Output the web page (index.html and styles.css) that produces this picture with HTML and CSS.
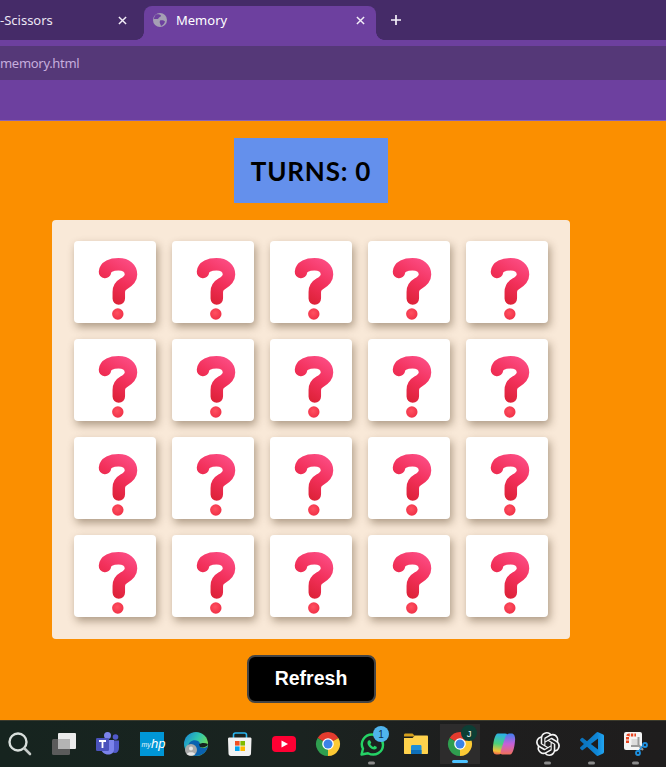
FILE: index.html
```html
<!DOCTYPE html>
<html lang="en">
<head>
<meta charset="utf-8">
<title>Memory</title>
<link rel="stylesheet" href="styles.css">
</head>
<body>
<svg class="defs" aria-hidden="true">
  <defs>
    <linearGradient id="qg" gradientUnits="userSpaceOnUse" x1="60" y1="24" x2="38" y2="60">
      <stop offset="0" stop-color="#fb4a80"/>
      <stop offset="0.5" stop-color="#f2305a"/>
      <stop offset="1" stop-color="#dd2238"/>
    </linearGradient>
    <radialGradient id="dg" cx="0.45" cy="0.4" r="0.7">
      <stop offset="0" stop-color="#ff5060"/>
      <stop offset="1" stop-color="#ee2c44"/>
    </radialGradient>
    <symbol id="q" viewBox="0 0 82 82">
      <path d="M31 31C31.500 25.500 37.500 23.300 44.500 23.300C52.500 23.300 57 27.500 57 33.500C57 38.500 53 41 49.500 43C46 45 44.800 47 44.800 51L44.800 57.500" fill="none" stroke="url(#qg)" stroke-width="12.500" stroke-linecap="round" stroke-linejoin="round"/>
      <circle cx="43.800" cy="73" r="5.700" fill="url(#dg)"/>
    </symbol>
    <symbol id="chrome" viewBox="0 0 40 47">
      <path d="M20 24L9.600 18A12 12 0 0 1 30.400 18Z" fill="#e33b2e"/>
      <path d="M20 24L30.400 18A12 12 0 0 1 20 36Z" fill="#fcc934"/>
      <path d="M20 24L20 36A12 12 0 0 1 9.600 18Z" fill="#2f9e4f"/>
      <circle cx="20" cy="24" r="5.800" fill="#fff"/>
      <circle cx="20" cy="24" r="4.500" fill="#3b82e8"/>
    </symbol>
    <linearGradient id="edge" x1="0.1" y1="0.1" x2="0.9" y2="0.6">
      <stop offset="0" stop-color="#1b8fd0"/>
      <stop offset="0.5" stop-color="#2fc5b0"/>
      <stop offset="1" stop-color="#6fdc5c"/>
    </linearGradient>
    <linearGradient id="vs" x1="0" y1="0" x2="1" y2="0">
      <stop offset="0" stop-color="#0a70b8"/>
      <stop offset="0.7" stop-color="#0f86d6"/>
      <stop offset="1" stop-color="#22a5f1"/>
    </linearGradient>
    <linearGradient id="copa" x1="0.5" y1="0" x2="0.4" y2="1">
      <stop offset="0" stop-color="#2bb0e8"/>
      <stop offset="0.5" stop-color="#4bd07a"/>
      <stop offset="0.85" stop-color="#f5c13a"/>
      <stop offset="1" stop-color="#ee6a4a"/>
    </linearGradient>
    <linearGradient id="copb" x1="0.5" y1="0" x2="0.5" y2="1">
      <stop offset="0" stop-color="#f0705a"/>
      <stop offset="0.5" stop-color="#c75fd8"/>
      <stop offset="1" stop-color="#3f7ff0"/>
    </linearGradient>
  </defs>
</svg>

<header class="chrome">
  <div class="tabstrip">
    <div class="tab">
      <span class="tab-title">-Scissors</span>
      <svg class="close" viewBox="0 0 10 10"><path d="M1 1L9 9M9 1L1 9"/></svg>
    </div>
    <div class="tab tab-active">
      <svg class="globe" viewBox="0 0 14 14">
        <circle cx="7" cy="7" r="7" fill="#a59fb4"/>
        <path d="M3 1.500C5 1 7 1.500 8 2.500C8 4 6 4 5.500 5.200C5 6.500 3 6 1 6C1 4 2 2.500 3 1.500ZM7 7.500C9 7 11 7.500 12 8.500C11.500 10.500 10 12.500 8 13C7.500 11 6 9.500 7 7.500Z" fill="#6d409f"/>
      </svg>
      <span class="tab-title">Memory</span>
      <svg class="close" viewBox="0 0 10 10"><path d="M1 1L9 9M9 1L1 9"/></svg>
    </div>
    <svg class="plus" viewBox="0 0 12 12"><path d="M6 1V11M1 6H11"/></svg>
  </div>
  <div class="toolbar">
    <div class="address">memory.html</div>
  </div>
  <div class="bookmarks"></div>
</header>

<main class="page">
  <div class="turns">TURNS: 0</div>
  <section class="board">
    <div class="card"><svg class="q"><use href="#q"/></svg></div>
    <div class="card"><svg class="q"><use href="#q"/></svg></div>
    <div class="card"><svg class="q"><use href="#q"/></svg></div>
    <div class="card"><svg class="q"><use href="#q"/></svg></div>
    <div class="card"><svg class="q"><use href="#q"/></svg></div>
    <div class="card"><svg class="q"><use href="#q"/></svg></div>
    <div class="card"><svg class="q"><use href="#q"/></svg></div>
    <div class="card"><svg class="q"><use href="#q"/></svg></div>
    <div class="card"><svg class="q"><use href="#q"/></svg></div>
    <div class="card"><svg class="q"><use href="#q"/></svg></div>
    <div class="card"><svg class="q"><use href="#q"/></svg></div>
    <div class="card"><svg class="q"><use href="#q"/></svg></div>
    <div class="card"><svg class="q"><use href="#q"/></svg></div>
    <div class="card"><svg class="q"><use href="#q"/></svg></div>
    <div class="card"><svg class="q"><use href="#q"/></svg></div>
    <div class="card"><svg class="q"><use href="#q"/></svg></div>
    <div class="card"><svg class="q"><use href="#q"/></svg></div>
    <div class="card"><svg class="q"><use href="#q"/></svg></div>
    <div class="card"><svg class="q"><use href="#q"/></svg></div>
    <div class="card"><svg class="q"><use href="#q"/></svg></div>
  </section>
  <button class="refresh" type="button">Refresh</button>
</main>

<footer class="taskbar">
  <div class="task"><svg viewBox="0 0 40 47">
    <circle cx="18" cy="22" r="8.500" fill="none" stroke="#d9dfdc" stroke-width="2.400"/>
    <path d="M24.500 28.500L30 34" stroke="#c5cbc8" stroke-width="2.600" stroke-linecap="round"/>
  </svg></div>
  <div class="task"><svg viewBox="0 0 40 47">
    <rect x="8" y="19" width="18" height="16" rx="1.500" fill="#5b5b5b"/>
    <rect x="14" y="13" width="18" height="16" rx="1" fill="#ececec"/>
    <rect x="14" y="19" width="12" height="10" fill="#b4b4b4"/>
  </svg></div>
  <div class="task"><svg viewBox="0 0 40 47">
    <circle cx="27.500" cy="17" r="2.800" fill="#5059c9"/>
    <path d="M23 20.500H31V28C31 31 29 33 27 33C25 33 23 31 23 28Z" fill="#5059c9"/>
    <circle cx="19.500" cy="15.500" r="3.500" fill="#7b83eb"/>
    <path d="M13 20H26V29.500C26 32.500 23.500 34.500 20 34.500C16.500 34.500 13 32 13 28Z" fill="#7b83eb"/>
    <rect x="8" y="18" width="13" height="13" rx="1.200" fill="#4b53bc"/>
    <path d="M11 21H18M14.500 21V28" stroke="#fff" stroke-width="1.800" fill="none"/>
  </svg></div>
  <div class="task"><svg viewBox="0 0 40 47">
    <rect x="8" y="12" width="24" height="24" fill="#0096d6"/>
    <text x="9.500" y="27" class="hp-my">my</text>
    <text x="19" y="28" class="hp-hp">hp</text>
  </svg></div>
  <div class="task"><svg viewBox="0 0 40 47">
    <circle cx="20" cy="24" r="12" fill="url(#edge)"/>
    <path d="M12 27C12 21 18 19 22 21C25 23 24.500 26 24 27C27 29 31 28 32 25C31.500 32 26 36 20 36C15 36 12 32 12 27Z" fill="#0a62b0"/>
    <path d="M23 24.500C25 22.500 29 22.500 32 24C31 27 27 28 24 27Z" fill="#16231f"/>
    <circle cx="15" cy="30" r="6" fill="#a9a9a9"/>
    <circle cx="15" cy="28.500" r="2" fill="#e6e6e6"/>
    <path d="M11 34C11.500 31.500 18.500 31.500 19 34C17 36 13 36 11 34Z" fill="#e6e6e6"/>
  </svg></div>
  <div class="task"><svg viewBox="0 0 40 47">
    <path d="M13.500 20V15C13.500 13.500 14.500 13 15.500 13H24.500C25.500 13 26.500 13.500 26.500 15V20" fill="none" stroke="#29b6ef" stroke-width="1.600"/>
    <path d="M8 19C8 18 8.500 17.500 9.500 17.500H30C31 17.500 31.500 18 31.500 19L31 33.500C31 35 30 36 28.500 36H11C9.500 36 8.500 35 8.500 33.500Z" fill="#f2f2f2"/>
    <rect x="15" y="21" width="4.600" height="4.600" fill="#f25022"/>
    <rect x="20.400" y="21" width="4.600" height="4.600" fill="#7fba00"/>
    <rect x="15" y="26.400" width="4.600" height="4.600" fill="#00a4ef"/>
    <rect x="20.400" y="26.400" width="4.600" height="4.600" fill="#ffb900"/>
  </svg></div>
  <div class="task"><svg viewBox="0 0 40 47">
    <rect x="8" y="16" width="24" height="16" rx="4" fill="#ff0033"/>
    <path d="M17.500 20.500L24 24L17.500 27.500Z" fill="#fff"/>
  </svg></div>
  <div class="task"><svg viewBox="0 0 40 47"><use href="#chrome"/></svg></div>
  <div class="task"><svg viewBox="0 0 40 47">
    <path d="M9.500 34.500L11 28.800C7.500 22 12.500 14.500 20 14.500C26.500 14.500 31 19 31 25C31 32 23.500 37 16 33.200Z" fill="none" stroke="#25d366" stroke-width="2.400" stroke-linejoin="round"/>
    <path d="M16.500 20.500C15 21.500 15 24 17 26.500C19 29 22 30 24 29C25 28.400 25 27.200 24.500 26.800L22.500 25.800L21.300 27C20 26.500 18.800 25.200 18.300 24L19.300 22.800L18.300 20.700C17.800 20.200 17 20.200 16.500 20.500Z" fill="#25d366"/>
    <circle cx="29" cy="14" r="8" fill="#4fb4ee"/>
    <text x="29" y="17.500" class="badge-one">1</text>
    <rect x="16" y="41.500" width="7" height="3" rx="1.500" fill="#8a8a8a"/>
  </svg></div>
  <div class="task"><svg viewBox="0 0 40 47">
    <path d="M8 15C8 14 8.500 13.500 9.500 13.500H16.500L19.500 16.500H8Z" fill="#d59f1c"/>
    <path d="M8 18H16.500L19 15.500H31C31.600 15.500 32 16 32 16.500V33C32 33.600 31.600 34 31 34H9C8.400 34 8 33.600 8 33Z" fill="#ffd24c"/>
    <path d="M15 26.500C15 25.500 15.500 25 16.500 25H24C25 25 25.500 25.500 25.500 26.500V34H15Z" fill="#1f8fd8"/>
    <rect x="15" y="30" width="10.500" height="4" fill="#0f6fb8"/>
  </svg></div>
  <div class="task task-active"><svg viewBox="0 0 40 47">
    <use href="#chrome"/>
    <circle cx="29" cy="13" r="8" fill="#0c3f35"/>
    <text x="29" y="16.500" class="badge-j">J</text>
    <rect x="12" y="40" width="16" height="3" rx="1.500" fill="#4cc2ff"/>
  </svg></div>
  <div class="task"><svg viewBox="0 0 40 47">
    <path d="M14 13.500H21C23.500 13.500 24 15 23 18L19 30C18 33 17 34.500 14 34.500H12.500C9.500 34.500 8.500 31 9 27C9.500 21 11 13.500 14 13.500Z" fill="url(#copa)"/>
    <path transform="rotate(180 20 24)" d="M14 13.500H21C23.500 13.500 24 15 23 18L19 30C18 33 17 34.500 14 34.500H12.500C9.500 34.500 8.500 31 9 27C9.500 21 11 13.500 14 13.500Z" fill="url(#copb)"/>
  </svg></div>
  <div class="task"><svg viewBox="0 0 40 47">
    <g transform="translate(8 12)"><path fill="#f4f4f4" d="M22.2819 9.8211a5.9847 5.9847 0 0 0-.5157-4.9108 6.0462 6.0462 0 0 0-6.5098-2.9A6.0651 6.0651 0 0 0 4.9807 4.1818a5.9847 5.9847 0 0 0-3.9977 2.9 6.0462 6.0462 0 0 0 .7427 7.0966 5.98 5.98 0 0 0 .511 4.9107 6.051 6.051 0 0 0 6.5146 2.9001A5.9847 5.9847 0 0 0 13.2599 24a6.0557 6.0557 0 0 0 5.7718-4.2058 5.9894 5.9894 0 0 0 3.9977-2.9001 6.0557 6.0557 0 0 0-.7475-7.0729zm-9.022 12.6081a4.4755 4.4755 0 0 1-2.8764-1.0408l.1419-.0804 4.7783-2.7582a.7948.7948 0 0 0 .3927-.6813v-6.7369l2.02 1.1686a.071.071 0 0 1 .038.052v5.5826a4.504 4.504 0 0 1-4.4945 4.4944zm-9.6607-4.1254a4.4708 4.4708 0 0 1-.5346-3.0137l.142.0852 4.783 2.7582a.7712.7712 0 0 0 .7806 0l5.8428-3.3685v2.3324a.0804.0804 0 0 1-.0332.0615L9.74 19.9502a4.4992 4.4992 0 0 1-6.1408-1.6464zM2.3408 7.8956a4.485 4.485 0 0 1 2.3655-1.9728V11.6a.7664.7664 0 0 0 .3879.6765l5.8144 3.3543-2.0201 1.1685a.0757.0757 0 0 1-.071 0l-4.8303-2.7865A4.504 4.504 0 0 1 2.3408 7.872zm16.5963 3.8558L13.1038 8.364 15.1192 7.2a.0757.0757 0 0 1 .071 0l4.8303 2.7913a4.4944 4.4944 0 0 1-.6765 8.1042v-5.6772a.79.79 0 0 0-.407-.667zm2.0107-3.0231l-.142-.0852-4.7735-2.7818a.7759.7759 0 0 0-.7854 0L9.409 9.2297V6.8974a.0662.0662 0 0 1 .0284-.0615l4.8303-2.7866a4.4992 4.4992 0 0 1 6.6802 4.66zM8.3065 12.863l-2.02-1.1638a.0804.0804 0 0 1-.038-.0567V6.0742a4.4992 4.4992 0 0 1 7.3757-3.4537l-.142.0805L8.704 5.459a.7948.7948 0 0 0-.3927.6813zm1.0976-2.3654l2.602-1.4998 2.6069 1.4998v2.9994l-2.5974 1.4997-2.6067-1.4997Z"/></g>
    <rect x="16" y="41.500" width="7" height="3" rx="1.500" fill="#8a8a8a"/>
  </svg></div>
  <div class="task"><svg viewBox="0 0 40 47">
    <g transform="translate(8 12)"><path fill="url(#vs)" d="M23.15 2.587L18.21.21a1.494 1.494 0 0 0-1.705.29l-9.46 8.63-4.12-3.128a.999.999 0 0 0-1.276.057L.327 7.261A1 1 0 0 0 .326 8.74L3.899 12 .326 15.26a1 1 0 0 0 .001 1.479L1.65 17.94a.999.999 0 0 0 1.276.057l4.12-3.128 9.46 8.63a1.492 1.492 0 0 0 1.704.29l4.942-2.377A1.5 1.5 0 0 0 24 20.06V3.939a1.5 1.5 0 0 0-.85-1.352zm-5.146 14.861L10.826 12l7.178-5.448v10.896z"/></g>
    <rect x="16" y="41.500" width="7" height="3" rx="1.500" fill="#8a8a8a"/>
  </svg></div>
  <div class="task"><svg viewBox="0 0 40 47">
    <rect x="8" y="12" width="18" height="18" rx="2" fill="#f4f4f4"/>
    <path d="M11.500 23V16.500C11.500 15.500 12 15 13 15H20" fill="none" stroke="#e8431f" stroke-width="3" stroke-dasharray="2.400 1.100"/>
    <path d="M15.500 19H22V26H15.500Z" fill="#dcdcdc"/>
    <path d="M22.500 17V25L27 30M15 26H24" fill="none" stroke="#9a9a9a" stroke-width="2"/>
    <circle cx="29" cy="25" r="2" fill="none" stroke="#1e90e0" stroke-width="1.800"/>
    <circle cx="22" cy="33" r="2" fill="none" stroke="#1e90e0" stroke-width="1.800"/>
    <path d="M23 31L26 26.500L27.500 25.500" fill="none" stroke="#1e90e0" stroke-width="1.400"/>
    <rect x="16" y="41.500" width="7" height="3" rx="1.500" fill="#8a8a8a"/>
  </svg></div>
</footer>
</body>
</html>
```

FILE: styles.css
```css
* {
  box-sizing: border-box;
}

html,
body {
  margin: 0;
  height: 767px;
  overflow: hidden;
}

body {
  display: flex;
  flex-direction: column;
  background: #fb8f00;
  font-family: "Noto Sans", sans-serif;
}

.defs {
  display: block;
  width: 0;
  height: 0;
}

/* browser chrome */
.tabstrip {
  display: flex;
  align-items: flex-end;
  height: 40px;
  background: #452b68;
}

.tab {
  position: relative;
  display: flex;
  align-items: center;
  justify-content: space-between;
  width: 144px;
  height: 34px;
  padding: 0 17px 6px 0;
  color: #ece6f4;
  font-size: 13px;
}

.tab-active {
  justify-content: flex-start;
  width: 232px;
  padding: 0 11px 6px 9px;
  gap: 9px;
  background: #6d409f;
  border-radius: 8px 8px 0 0;
  color: #fff;
}

.tab-active::before,
.tab-active::after {
  content: "";
  position: absolute;
  bottom: 0;
  width: 8px;
  height: 8px;
}

.tab-active::before {
  left: -8px;
  background: radial-gradient(circle at 0 0, transparent 7.5px, #6d409f 8px);
}

.tab-active::after {
  right: -8px;
  background: radial-gradient(circle at 100% 0, transparent 7.5px, #6d409f 8px);
}

.tab-title {
  line-height: 18px;
}

.globe {
  flex: none;
  width: 14px;
  height: 14px;
}

.close {
  flex: none;
  width: 9px;
  height: 9px;
  fill: none;
  stroke: #f3eef8;
  stroke-width: 1.600;
}

.tab-active .close {
  margin-left: auto;
}

.plus {
  flex: none;
  width: 12px;
  height: 12px;
  margin: 0 0 14px 14px;
  fill: none;
  stroke: #f5f1fa;
  stroke-width: 1.700;
}

.toolbar {
  height: 40px;
  padding-top: 6px;
  background: #6d409f;
}

.address {
  height: 34px;
  background: #553878;
  color: #c6aedd;
  font-size: 13px;
  letter-spacing: -0.3px;
  line-height: 34px;
}

.bookmarks {
  height: 41px;
  background: #6d409f;
  border-bottom: 1px solid #8a64b4;
}

/* game */
.page {
  flex: 1;
  display: flex;
  flex-direction: column;
  align-items: center;
  padding: 17px 44px 0 0;
  background: #fb8f00;
}

.turns {
  width: 154px;
  height: 65px;
  background: #6490ec;
  color: #000;
  font-family: "Comic Sans MS", "Lato", sans-serif;
  font-size: 26px;
  font-weight: 700;
  line-height: 67px;
  text-align: center;
  letter-spacing: 0.8px;
}

.board {
  display: grid;
  grid-template-columns: repeat(5, 82px);
  grid-auto-rows: 82px;
  gap: 16px;
  width: 518px;
  height: 419px;
  margin-top: 17px;
  padding: 21px 22px 22px;
  background: #f9e9d8;
  border-radius: 4px;
}

.card {
  background: #fff;
  border-radius: 4px;
  box-shadow: 2px 4px 8px rgba(70, 45, 20, 0.42);
}

.q {
  display: block;
  width: 82px;
  height: 82px;
}

.refresh {
  width: 129px;
  height: 48px;
  margin-top: 16px;
  padding: 0 0 2px;
  background: #000;
  border: 2px solid #444;
  border-radius: 8px;
  color: #fff;
  font-family: "Liberation Sans", Arial, sans-serif;
  font-size: 19.500px;
  font-weight: 700;
}

/* taskbar */
.taskbar {
  display: flex;
  flex: none;
  gap: 4px;
  height: 47px;
  background: linear-gradient(90deg, #16241f 0%, #1a2320 45%, #1e1e1e 70%, #1f1d1d 100%);
  box-shadow: inset 0 1px 0 #3b3a2c;
}

.task {
  flex: none;
  width: 40px;
  height: 47px;
}

.task svg {
  display: block;
  width: 40px;
  height: 47px;
}

.task-active {
  background: linear-gradient(#2d2c2c, #2d2c2c) no-repeat 0 4px / 40px 40px;
  border-radius: 4px;
}

.hp-my {
  fill: #e8f6fd;
  font-family: "Liberation Sans", sans-serif;
  font-size: 7px;
  font-style: italic;
}

.hp-hp {
  fill: #fff;
  font-family: "Liberation Sans", sans-serif;
  font-size: 13px;
  font-style: italic;
}

.badge-one {
  fill: #10314a;
  font-family: "Liberation Sans", sans-serif;
  font-size: 10px;
  text-anchor: middle;
}

.badge-j {
  fill: #eaf5f1;
  font-family: "Liberation Sans", sans-serif;
  font-size: 9.500px;
  text-anchor: middle;
}
```
